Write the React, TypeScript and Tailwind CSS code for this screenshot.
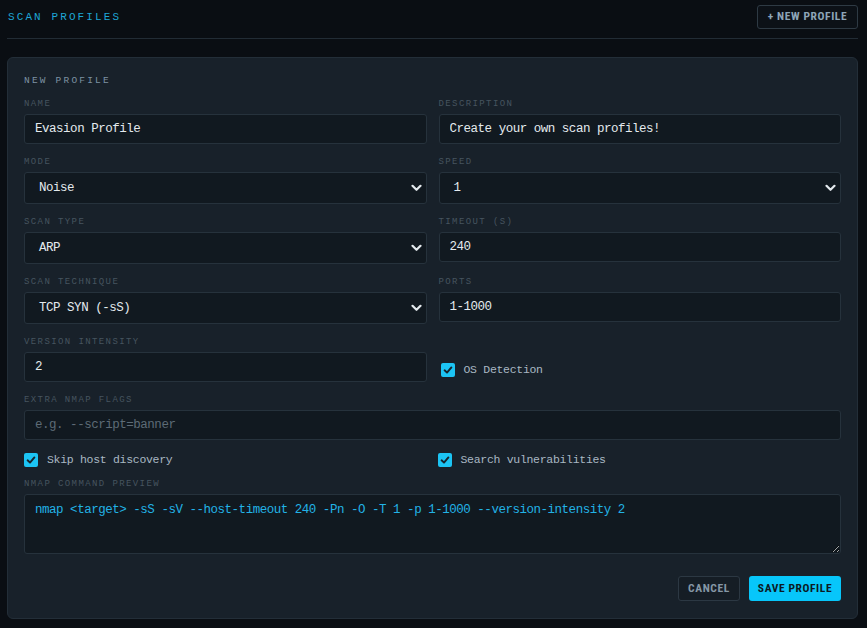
import React from "react";

const mono = "font-['Liberation_Mono','DejaVu_Sans_Mono',monospace]";
const cond = "font-['Roboto_Condensed','Roboto','Liberation_Sans',sans-serif]";

function Label({ children }: { children: React.ReactNode }) {
  return (
    <div className={`${mono} text-[9px] leading-[12px] tracking-[1.4px] text-[#46545f] uppercase mb-1`}>
      {children}
    </div>
  );
}

const inputText = "text-[12.5px] tracking-[-0.48px]";

function TextInput({ value, placeholder }: { value?: string; placeholder?: string }) {
  return (
    <input
      readOnly
      defaultValue={value}
      placeholder={placeholder}
      className={`${mono} ${inputText} block w-full h-[30px] px-[10px] rounded-[3px] border border-[#26323c] bg-[#111920] text-[#e4eaee] placeholder:text-[#5d6b76] outline-none`}
    />
  );
}

function Select({ value }: { value: string }) {
  return (
    <div className="relative">
      <div
        className={`${mono} ${inputText} flex items-center w-full h-[32px] pl-[14px] rounded-[3px] border border-[#26323c] bg-[#111920] text-[#e4eaee]`}
      >
        {value}
      </div>
      <svg
        className="absolute right-[5px] top-[12px]"
        width="11"
        height="8"
        viewBox="0 0 11 8"
        fill="none"
      >
        <path d="M1.5 1.8 L5.5 5.8 L9.5 1.8" stroke="#e4eaee" strokeWidth="2.2" strokeLinecap="round" strokeLinejoin="round" />
      </svg>
    </div>
  );
}

function Check({ label }: { label: string }) {
  return (
    <div className="flex items-center gap-[9px] h-4">
      <div className="w-[14px] h-[14px] rounded-[2px] bg-[#1cc4f4] flex items-center justify-center">
        <svg width="10" height="10" viewBox="0 0 10 10" fill="none">
          <path d="M1.6 5.3 L4 7.6 L8.4 2.4" stroke="#16232c" strokeWidth="1.9" strokeLinecap="round" strokeLinejoin="round" />
        </svg>
      </div>
      <span className={`${mono} text-[11.5px] tracking-[-0.3px] text-[#a9b8c3]`}>{label}</span>
    </div>
  );
}

export default function App() {
  return (
    <div className="w-[867px] h-[628px] bg-[#0a0e13] px-[7px] pt-[5px] overflow-hidden">
      <div className="flex items-center justify-between h-[24px] mb-[9px] pr-[2px]">
        <div className={`${mono} text-[11px] tracking-[2.1px] text-[#1ea6d6] pl-[1px]`}>SCAN PROFILES</div>
        <button
          className={`${cond} h-[24px] w-[101px] rounded-[3px] border border-[#2e3a44] bg-[#0c1117] text-[11.5px] font-bold tracking-[0.6px] text-[#8ea5b8] whitespace-nowrap`}
        >
          + NEW PROFILE
        </button>
      </div>
      <div className="h-px bg-[#222c35] mr-[2px]" />
      <div className="mt-[18px] mr-[2px] rounded-[6px] border border-[#232e38] bg-[#18212a] px-4 pt-[17px] pb-[17px]">
        <div className={`${mono} text-[9.5px] leading-[12px] tracking-[2.2px] text-[#7d92a2] mb-3`}>NEW PROFILE</div>
        <div className="grid grid-cols-2 gap-x-3 gap-y-3 -mt-[1px]">
          <div>
            <Label>Name</Label>
            <TextInput value="Evasion Profile" />
          </div>
          <div>
            <Label>Description</Label>
            <TextInput value="Create your own scan profiles!" />
          </div>
          <div>
            <Label>Mode</Label>
            <Select value="Noise" />
          </div>
          <div>
            <Label>Speed</Label>
            <Select value="1" />
          </div>
          <div>
            <Label>Scan Type</Label>
            <Select value="ARP" />
          </div>
          <div>
            <Label>Timeout (s)</Label>
            <TextInput value="240" />
          </div>
          <div>
            <Label>Scan Technique</Label>
            <Select value="TCP SYN (-sS)" />
          </div>
          <div>
            <Label>Ports</Label>
            <TextInput value="1-1000" />
          </div>
          <div>
            <Label>Version Intensity</Label>
            <TextInput value="2" />
          </div>
          <div className="flex items-end pb-[4px] pl-[2px]">
            <Check label="OS Detection" />
          </div>
          <div className="col-span-2">
            <Label>Extra Nmap Flags</Label>
            <TextInput placeholder="e.g. --script=banner" />
          </div>
          <div>
            <Check label="Skip host discovery" />
          </div>
          <div className="-ml-[1px]">
            <Check label="Search vulnerabilities" />
          </div>
          <div className="col-span-2 -mt-[2px]">
            <Label>Nmap Command Preview</Label>
            <textarea
              readOnly
              defaultValue="nmap <target> -sS -sV --host-timeout 240 -Pn -O -T 1 -p 1-1000 --version-intensity 2"
              className={`${mono} ${inputText} block w-full h-[60px] px-[10px] pt-[8px] rounded-[3px] border border-[#26323c] bg-[#111920] leading-[14px] text-[#22b3e6] outline-none`}
            />
          </div>
        </div>
        <div className="flex justify-end gap-[9px] mt-[22px]">
          <button
            className={`${cond} h-[25px] w-[62px] rounded-[3px] border border-[#2c3843] bg-[#151d25] text-[11.5px] font-bold tracking-[0.6px] text-[#8597a5]`}
          >
            CANCEL
          </button>
          <button
            className={`${cond} h-[25px] w-[92px] rounded-[3px] bg-[#07c6fa] text-[11.5px] font-bold tracking-[0.6px] text-[#0b1a24] whitespace-nowrap`}
          >
            SAVE PROFILE
          </button>
        </div>
      </div>
    </div>
  );
}
